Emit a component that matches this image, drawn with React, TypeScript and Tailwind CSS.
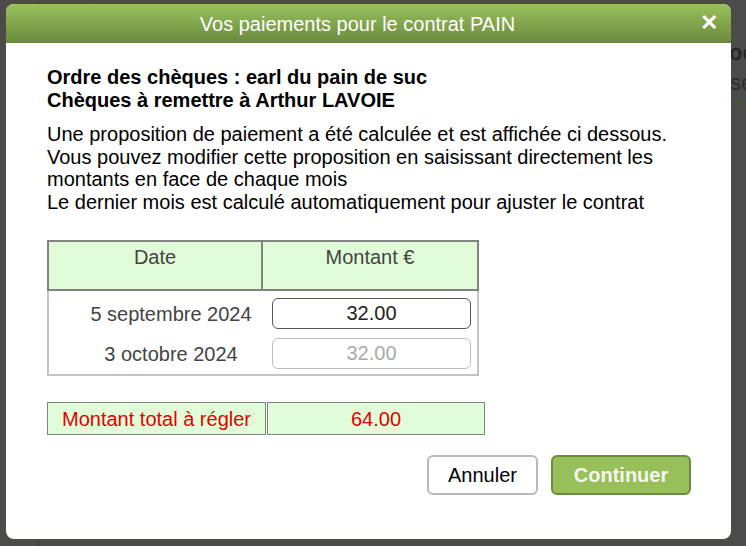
import { useState } from "react";

const rows = [
  { date: "5 septembre 2024", amount: "32.00", editable: true },
  { date: "3 octobre 2024", amount: "32.00", editable: false },
];

export default function App() {
  const [amounts, setAmounts] = useState(rows.map((r) => r.amount));

  const handleAmount = (i: number, value: string) => {
    const next = [...amounts];
    next[i] = value;
    setAmounts(next);
  };

  return (
    <div className="relative w-[746px] h-[546px] overflow-hidden bg-[#4c4b49] font-['Liberation_Sans',Arial,sans-serif]">
      {/* page behind the overlay */}
      <div className="flex h-full">
        <div className="w-[39px] border-r border-[#3e3e3d]" />
        <div className="w-[54px] h-[20px] border-r border-[#3c5230]" />
        <div className="flex-1" />
        <div className="w-[16px] flex flex-col pt-[39px] text-[22px] leading-[28px]">
          <div className="font-bold text-[#262626] -ml-[1px]">oc</div>
          <div className="text-[#2e2e2e] mt-[2px]">se</div>
          <div className="mt-[5px] h-[2px] bg-[#3c5a2c]" />
        </div>
      </div>

      {/* modal */}
      <div className="absolute left-[6px] top-[4px] w-[725px] h-[535px] bg-white rounded-[8px] overflow-hidden flex flex-col">
        <div className="relative h-[39px] shrink-0 flex items-center justify-center pr-[22px] bg-gradient-to-b from-[#9ac15d] to-[#6a8a3c] text-white text-[20px]">
          Vos paiements pour le contrat PAIN
          <span className="absolute right-[13px] top-[6px] font-bold text-[22px] leading-[26px]">✕</span>
        </div>

        <div className="flex flex-col pl-[41px] pr-[20px] pt-[23px] text-black">
          <div className="font-bold text-[20px] leading-[23px]">
            <div>Ordre des chèques : earl du pain de suc</div>
            <div>Chèques à remettre à Arthur LAVOIE</div>
          </div>
          <div className="mt-[11px] text-[20px] leading-[22.5px]">
            <div>Une proposition de paiement a été calculée et est affichée ci dessous.</div>
            <div>Vous pouvez modifier cette proposition en saisissant directement les</div>
            <div>montants en face de chaque mois</div>
            <div>Le dernier mois est calculé automatiquement pour ajuster le contrat</div>
          </div>

          <div className="mt-[27px] w-[432px] flex flex-col">
            <div className="grid grid-cols-2 h-[51px] bg-[#e0fcd8] border-2 border-[#828282] text-[20px] text-[#444]">
              <div className="text-center border-r-2 border-[#828282]">Date</div>
              <div className="text-center">Montant €</div>
            </div>
            <div className="flex flex-col gap-[9px] pt-[7px] pb-[5px] border-2 border-t-0 border-[#c4c4c4] text-[20px] text-[#444]">
              {rows.map((r, i) => (
                <div key={i} className="grid grid-cols-2 items-center h-[31px]">
                  <div className="text-center pl-[30px]">{r.date}</div>
                  <input
                    value={amounts[i]}
                    disabled={!r.editable}
                    onChange={(e) => handleAmount(i, e.target.value)}
                    className={
                      r.editable
                        ? "ml-[9px] w-[199px] h-[31px] rounded-[6px] border border-[#555] text-center text-[20px] text-[#222]"
                        : "ml-[9px] w-[199px] h-[31px] rounded-[6px] border border-[#bdbdbd] text-center text-[20px] text-[#aaa] bg-white"
                    }
                  />
                </div>
              ))}
            </div>
          </div>

          <div className="mt-[26px] w-[438px] grid grid-cols-2 h-[33px] text-[20px] text-[#e30000]">
            <div className="flex items-center pl-[14px] bg-[#e0fcd8] border border-[#828282]">Montant total à régler</div>
            <div className="flex items-center justify-center bg-[#e0fcd8] border border-[#828282] ml-[1px]">64.00</div>
          </div>

          <div className="mt-[20px] flex justify-end gap-[13px] pr-[20px]">
            <button className="w-[111px] h-[40px] rounded-[6px] border-2 border-[#b9b9b9] bg-white text-[20px] text-black">
              Annuler
            </button>
            <button className="w-[140px] h-[40px] rounded-[6px] border-2 border-[#6d8c3d] bg-[#97bf5a] text-[20px] font-bold text-[#f4f8ee]">
              Continuer
            </button>
          </div>
        </div>
      </div>
    </div>
  );
}
